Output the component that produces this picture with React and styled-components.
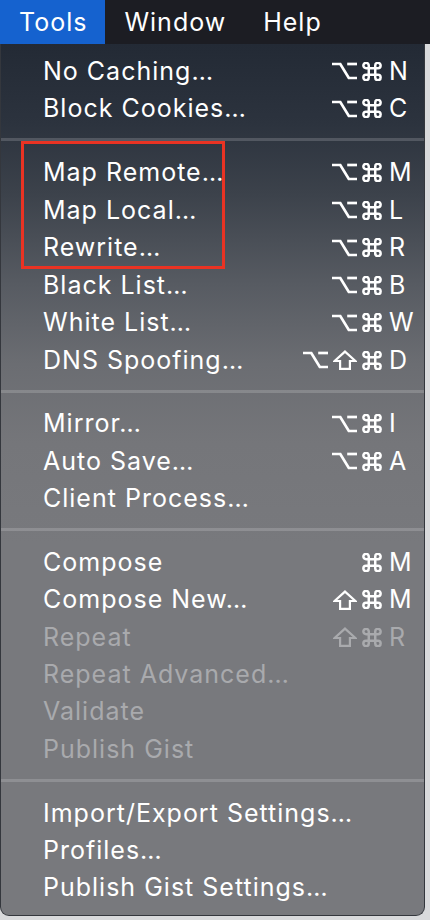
import React from "react";
import styled, { createGlobalStyle } from "styled-components";

const GlobalStyle = createGlobalStyle`
  html, body {
    margin: 0;
    padding: 0;
    background: #d9dadc;
  }
  body {
    font-family: Inter, "Noto Sans", "DejaVu Sans", sans-serif;
    -webkit-font-smoothing: antialiased;
  }
`;

// modifier key symbols, drawn as small stroke icons
const OptionIcon = () => (
  <svg width="25" height="20" viewBox="0 0 25 20" fill="none" stroke="currentColor" strokeWidth="2.7">
    <path d="M0 3 H8.3 L16.8 17 H25" />
    <path d="M15.2 3 H25" />
  </svg>
);

const ShiftIcon = () => (
  <svg width="24" height="20" viewBox="0 0 24 20" fill="none" stroke="currentColor" strokeWidth="2.2">
    <path d="M12 1.6 L22.4 11 H16.9 V18.8 H7.1 V11 H1.6 Z" />
  </svg>
);

const CommandIcon = () => (
  <svg width="20" height="19" viewBox="1.2 1.2 17.6 17.6" fill="none" stroke="currentColor" strokeWidth="2.3">
    <path d="M7 4.5 V15.5 A2.5 2.5 0 1 1 4.5 13 H15.5 A2.5 2.5 0 1 1 13 15.5 V4.5 A2.5 2.5 0 1 1 15.5 7 H4.5 A2.5 2.5 0 1 1 7 4.5 Z" />
  </svg>
);

const modIcons = { opt: OptionIcon, shift: ShiftIcon, cmd: CommandIcon };

const sections = [
  [
    { label: "No Caching…", mods: ["opt", "cmd"], key: "N" },
    { label: "Block Cookies…", mods: ["opt", "cmd"], key: "C" },
  ],
  [
    { label: "Map Remote…", mods: ["opt", "cmd"], key: "M", boxed: true },
    { label: "Map Local…", mods: ["opt", "cmd"], key: "L", boxed: true },
    { label: "Rewrite…", mods: ["opt", "cmd"], key: "R", boxed: true },
    { label: "Black List…", mods: ["opt", "cmd"], key: "B" },
    { label: "White List…", mods: ["opt", "cmd"], key: "W" },
    { label: "DNS Spoofing…", mods: ["opt", "shift", "cmd"], key: "D" },
  ],
  [
    { label: "Mirror…", mods: ["opt", "cmd"], key: "I" },
    { label: "Auto Save…", mods: ["opt", "cmd"], key: "A" },
    { label: "Client Process…" },
  ],
  [
    { label: "Compose", mods: ["cmd"], key: "M" },
    { label: "Compose New…", mods: ["shift", "cmd"], key: "M" },
    { label: "Repeat", mods: ["shift", "cmd"], key: "R", disabled: true },
    { label: "Repeat Advanced…", disabled: true },
    { label: "Validate", disabled: true },
    { label: "Publish Gist", disabled: true },
  ],
  [
    { label: "Import/Export Settings…" },
    { label: "Profiles…" },
    { label: "Publish Gist Settings…" },
  ],
];

const MenuItem = ({ item }) => (
  <Row disabled={item.disabled}>
    <Label>{item.label}</Label>
    {item.key && (
      <Shortcut>
        <Mods>
          {item.mods.map((m) => {
            const Icon = modIcons[m];
            return <Icon key={m} />;
          })}
        </Mods>
        <Key>{item.key}</Key>
      </Shortcut>
    )}
  </Row>
);

const App = () => {
  return (
    <Screen>
      <GlobalStyle />
      <MenuBar>
        <BarItem active>Tools</BarItem>
        <BarItem>Window</BarItem>
        <BarItem>Help</BarItem>
      </MenuBar>
      <Panel>
        {sections.map((section, sIndex) => {
          const boxed = section.filter((it) => it.boxed);
          const rest = section.filter((it) => !it.boxed);
          return (
            <React.Fragment key={sIndex}>
              {sIndex > 0 && <Separator />}
              {boxed.length > 0 && (
                <Highlight>
                  {boxed.map((item) => (
                    <MenuItem key={item.label} item={item} />
                  ))}
                  <RedBox />
                </Highlight>
              )}
              {rest.map((item) => (
                <MenuItem key={item.label} item={item} />
              ))}
            </React.Fragment>
          );
        })}
      </Panel>
    </Screen>
  );
};

const Screen = styled.div`
  width: 430px;
  height: 920px;
  overflow: hidden;
  display: flex;
  flex-direction: column;
`;

const MenuBar = styled.div`
  height: 44px;
  flex-shrink: 0;
  background: #1c1d23;
  display: flex;
  align-items: stretch;
`;

const BarItem = styled.div`
  display: flex;
  align-items: center;
  padding: 0 18px 0 19px;
  font-size: 25px;
  letter-spacing: 1px;
  color: #ffffff;
  background: ${(p) => (p.active ? "#1562cf" : "transparent")};
`;

const Panel = styled.div`
  width: 425px;
  height: 872px;
  box-sizing: border-box;
  padding: 8px 0 9px;
  border: 1px solid #34373d;
  border-top: none;
  border-radius: 0 0 9px 9px;
  background: linear-gradient(
    180deg,
    #232a35 0px,
    #2c333e 80px,
    #3c424b 150px,
    #575b62 240px,
    #6b6d72 320px,
    #75767a 400px,
    #78797d 500px,
    #78797d 100%
  );
  display: flex;
  flex-direction: column;
`;

const Row = styled.div`
  height: 37.7px;
  display: flex;
  align-items: center;
  padding: 0 0 0 42px;
  font-size: 25px;
  letter-spacing: 1px;
  color: ${(p) => (p.disabled ? "#a9aaad" : "#ffffff")};
`;

const Label = styled.span`
  flex: 1;
  white-space: nowrap;
`;

const Shortcut = styled.span`
  display: flex;
  align-items: center;
`;

const Mods = styled.span`
  display: flex;
  align-items: center;
  gap: 5px;
  padding-top: 1px;
`;

const Key = styled.span`
  width: 35px;
  margin-left: 7px;
  letter-spacing: 0;
`;

const Separator = styled.div`
  height: 3px;
  margin: 11.5px 0 11.8px;
  background: rgba(255, 255, 255, 0.17);
`;

const Highlight = styled.div`
  position: relative;
`;

const RedBox = styled.div`
  position: absolute;
  left: 20px;
  top: -12px;
  width: 204px;
  height: 128px;
  box-sizing: border-box;
  border: 3px solid #ea3323;
  pointer-events: none;
`;

export default App;
